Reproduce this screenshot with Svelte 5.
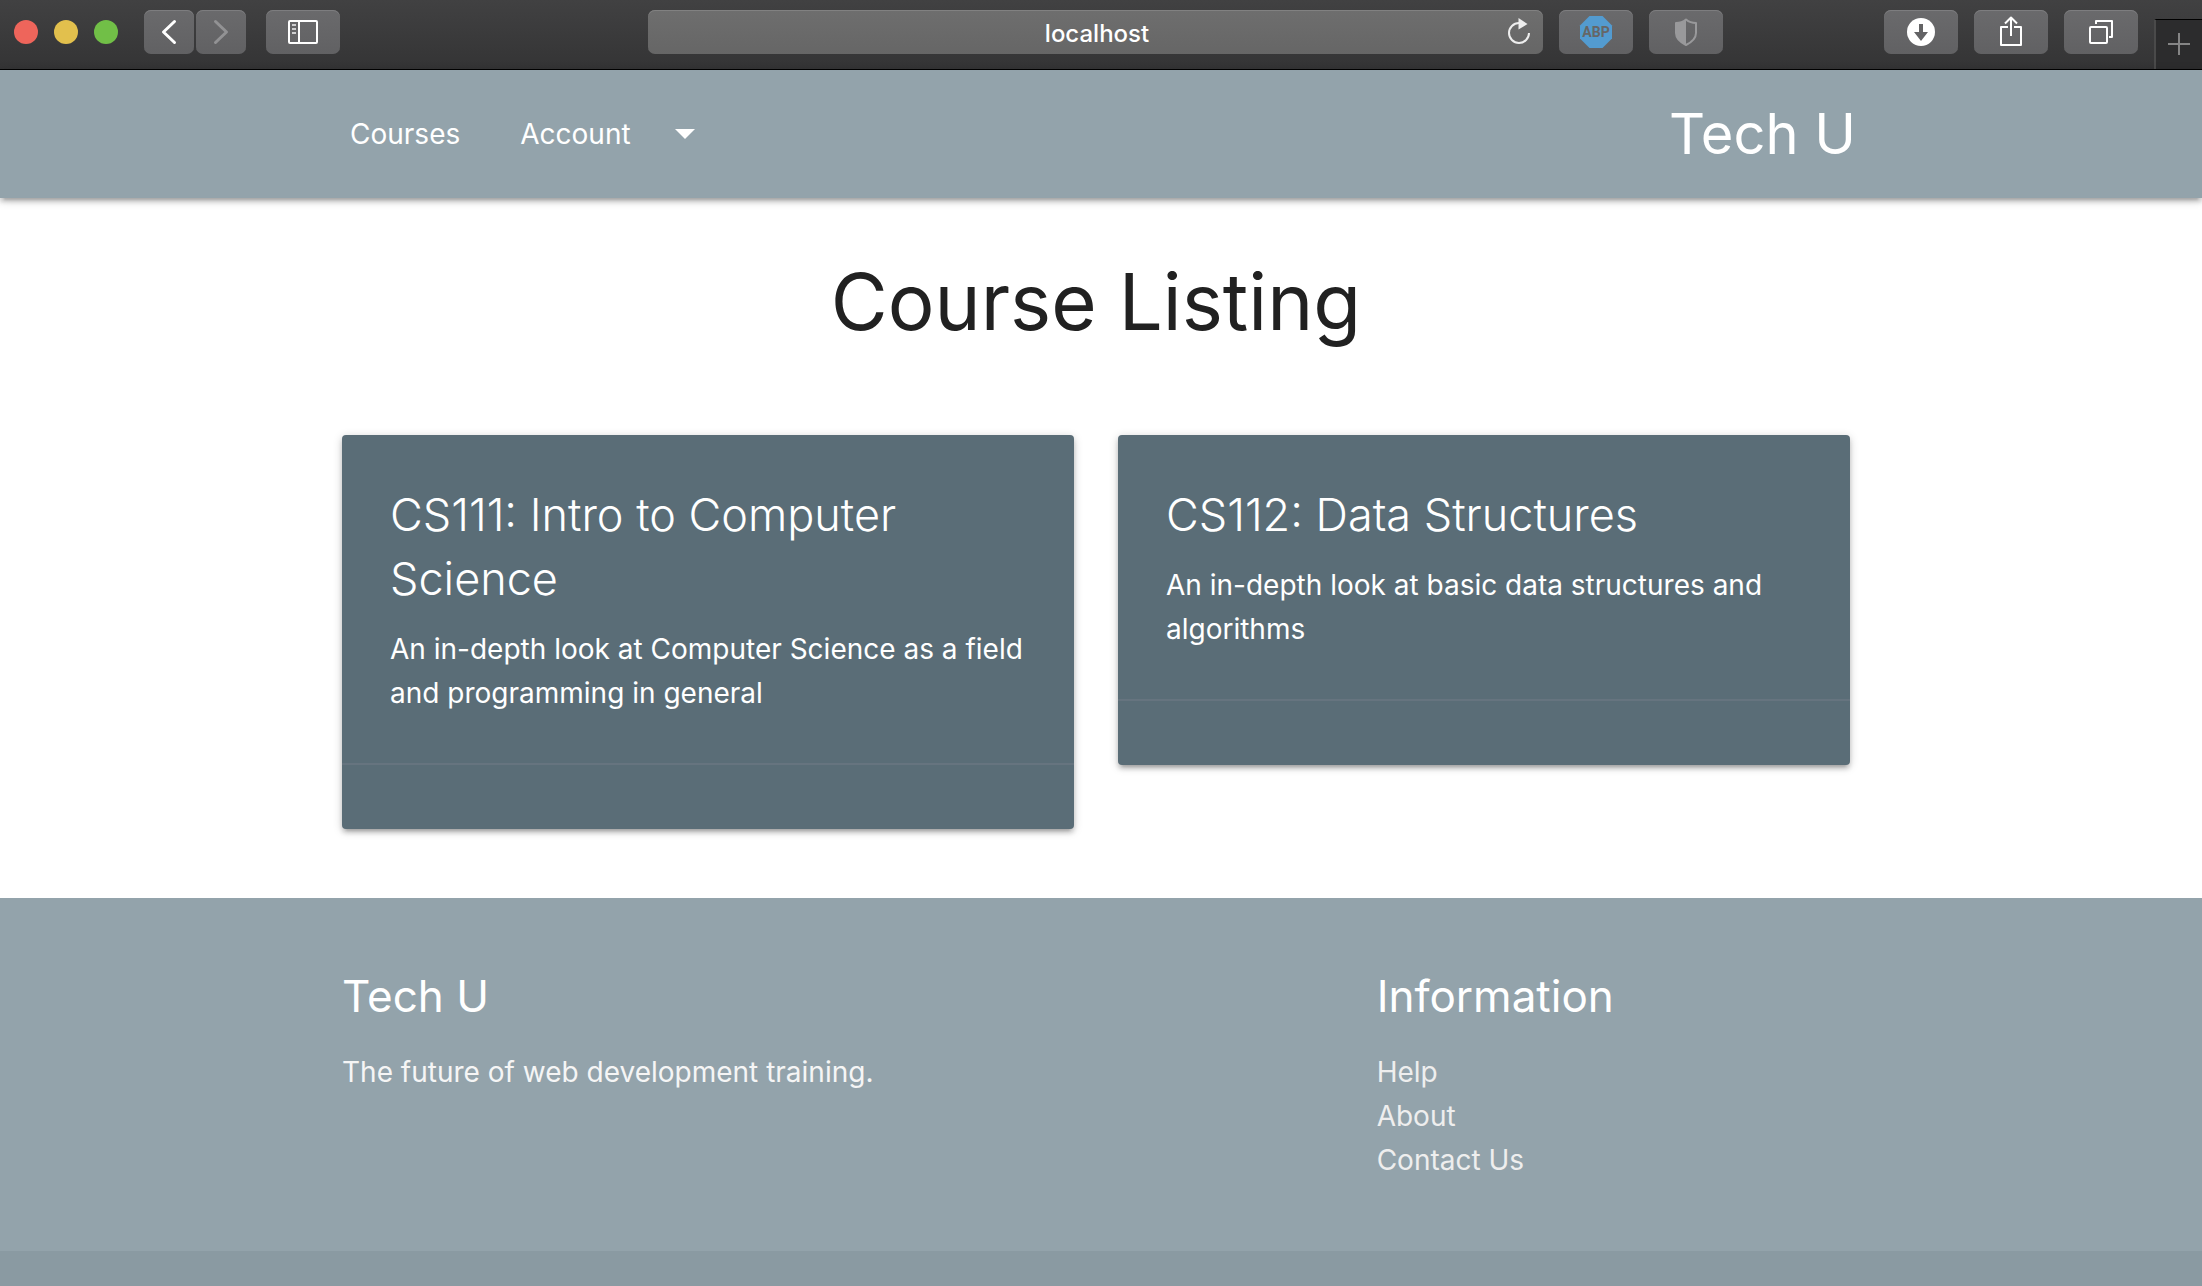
<script>
  const courses = [
    {
      title: 'CS111: Intro to Computer Science',
      text: 'An in-depth look at Computer Science as a field and programming in general',
    },
    {
      title: 'CS112: Data Structures',
      text: 'An in-depth look at basic data structures and algorithms',
    },
  ];
  const links = ['Help', 'About', 'Contact Us'];
</script>

<div class="toolbar">
  <div class="lights">
    <span class="light red"></span>
    <span class="light yellow"></span>
    <span class="light green"></span>
  </div>
  <div class="history">
    <button class="tool small" aria-label="Back">
      <svg width="50" height="44" viewBox="0 0 50 44"><path d="M30.500 11.500 19.500 22 30.500 32.500" fill="none" stroke="#fff" stroke-width="3" stroke-linecap="round" stroke-linejoin="round" /></svg>
    </button>
    <button class="tool small" aria-label="Forward">
      <svg width="50" height="44" viewBox="0 0 50 44"><path d="M19.500 11.500 30.500 22 19.500 32.500" fill="none" stroke="#929294" stroke-width="3" stroke-linecap="round" stroke-linejoin="round" /></svg>
    </button>
  </div>
  <button class="tool" aria-label="Sidebar">
    <svg width="74" height="44" viewBox="0 0 74 44">
      <rect x="23" y="11" width="28" height="22" rx="1" fill="none" stroke="#fff" stroke-width="2" />
      <path d="M33 11V33" stroke="#fff" stroke-width="2" />
      <path d="M26 15H30M26 19H30M26 23H30" stroke="#d0d0d1" stroke-width="2" />
    </svg>
  </button>
  <div class="address">
    <input type="text" value="localhost" aria-label="Address" />
    <button class="reload" aria-label="Reload">
      <svg width="28" height="30" viewBox="0 0 28 30">
        <path d="M13 6A10 10 0 1 0 23 16" fill="none" stroke="#eee" stroke-width="2" />
        <path d="M12.500 1V12.500L21.500 7Z" fill="#eee" />
      </svg>
    </button>
  </div>
  <button class="tool" aria-label="Adblock Plus">
    <svg width="74" height="44" viewBox="0 0 74 44">
      <path d="M30.500 6H43.500L53 15.500V28.500L43.500 38H30.500L21 28.500V15.500Z" fill="#539bd0" />
      <text x="37" y="27" text-anchor="middle" class="abp">ABP</text>
    </svg>
  </button>
  <button class="tool" aria-label="Privacy report">
    <svg width="74" height="44" viewBox="0 0 74 44">
      <path d="M37 9.500C40 12 43.500 13 47 13V23C47 29 42 32.500 37 35C32 32.500 27 29 27 23V13C30.500 13 34 12 37 9.500Z" fill="none" stroke="#99999b" stroke-width="2" stroke-linejoin="round" />
      <path d="M37 9.500V35C32 32.500 27 29 27 23V13C30.500 13 34 12 37 9.500Z" fill="#99999b" />
    </svg>
  </button>
  <div class="actions">
    <button class="tool" aria-label="Downloads">
      <svg width="74" height="44" viewBox="0 0 74 44">
        <circle cx="37" cy="22" r="14" fill="#fff" />
        <path d="M35 14H39V22H44L37 31 30 22H35Z" fill="#636365" />
      </svg>
    </button>
    <button class="tool" aria-label="Share">
      <svg width="74" height="44" viewBox="0 0 74 44" fill="none" stroke="#fff" stroke-width="2" stroke-linejoin="round">
        <path d="M34 17H27V35H47V17H40" />
        <path d="M37 26V8M31 13.500 37 7.500 43 13.500" />
      </svg>
    </button>
    <button class="tool" aria-label="Tab overview">
      <svg width="74" height="44" viewBox="0 0 74 44" fill="none" stroke="#fff" stroke-width="2" stroke-linejoin="round">
        <rect x="26" y="17" width="17" height="16" rx="1" />
        <path d="M32 14V11H48V27H45" />
      </svg>
    </button>
  </div>
  <button class="newtab" aria-label="New tab">
    <svg width="24" height="24" viewBox="0 0 24 24"><path d="M12 1V23M1 12H23" stroke="#858585" stroke-width="2" /></svg>
  </button>
</div>

<nav>
  <div class="container navrow">
    <a class="item" href="#courses">Courses</a>
    <a class="item" href="#account">Account
      <svg width="20" height="10" viewBox="0 0 20 10"><path d="M0 0H20L10 10Z" fill="#fff" /></svg>
    </a>
    <a class="brand" href="#home">Tech U</a>
  </div>
</nav>

<main>
  <div class="container">
    <h1>Course Listing</h1>
    <div class="cards">
      {#each courses as course}
        <article class="card">
          <div class="content">
            <h2>{course.title}</h2>
            <p>{course.text}</p>
          </div>
          <div class="action"></div>
        </article>
      {/each}
    </div>
  </div>
</main>

<footer>
  <div class="info">
    <div class="container columns">
      <div class="column">
        <h3>Tech U</h3>
        <p>The future of web development training.</p>
      </div>
      <div class="column">
        <h3>Information</h3>
        <ul>
          {#each links as link}
            <li><a href="#info">{link}</a></li>
          {/each}
        </ul>
      </div>
    </div>
  </div>
  <div class="copyright"></div>
</footer>

<style>
  :global(body) {
    background: #fff;
    font-family: Inter, 'Liberation Sans', sans-serif;
    font-size: 28px;
    line-height: 44px;
  }
  :global(#app) {
    display: flex;
    flex-direction: column;
    min-height: 100vh;
  }
  h1, h2, h3, p, ul { margin: 0; padding: 0; font-weight: 400; }
  button { border: 0; padding: 0; font: inherit; color: inherit; }
  a { color: inherit; text-decoration: none; }
  svg { display: block; flex: none; }

  .toolbar {
    display: flex;
    align-items: flex-start;
    gap: 16px;
    height: 70px;
    box-sizing: border-box;
    padding: 10px 0 0 14px;
    background: linear-gradient(#414142, #343435);
    border-bottom: 1px solid #000;
  }
  .lights { display: flex; gap: 16px; padding: 10px 10px 10px 0; }
  .light { width: 24px; height: 24px; border-radius: 50%; }
  .red { background: #ee655b; }
  .yellow { background: #e2c04d; }
  .green { background: #71bf47; }
  .history { display: flex; gap: 2px; margin-right: 4px; }
  .tool {
    width: 74px;
    height: 44px;
    border-radius: 7px;
    background: linear-gradient(#6a6a6c, #616163);
    box-shadow: inset 0 1px #7d7d7f;
    overflow: hidden;
  }
  .small { width: 50px; }
  .address {
    display: flex;
    align-items: center;
    flex: 1;
    height: 44px;
    margin-left: 292px;
    border-radius: 7px;
    background: linear-gradient(#6e6e6e, #666);
    box-shadow: inset 0 1px #818181;
  }
  .address input {
    flex: 1;
    min-width: 0;
    height: 44px;
    box-sizing: border-box;
    border: 0;
    padding: 2px 0 0 40px;
    background: none;
    color: #fff;
    font: 500 24px/40px Inter, 'Liberation Sans', sans-serif;
    text-align: center;
  }
  .reload { background: none; margin-right: 9px; }
  .abp { font: 700 14px Roboto, sans-serif; fill: #666; }
  .actions { display: flex; gap: 16px; margin-left: 145px; }
  .newtab {
    display: flex;
    align-items: center;
    justify-content: center;
    width: 48px;
    height: 50px;
    margin-top: 9px;
    padding-bottom: 2px;
    box-sizing: border-box;
    border-top: 1px solid #000;
    border-left: 2px solid #4a4a4a;
    background: #2c2c2d;
  }

  nav {
    flex: none;
    padding-right: 10px;
    background: #93a3ab;
    color: #fff;
    box-shadow: 0 4px 4px rgba(0, 0, 0, .14), 0 6px 2px -4px rgba(0, 0, 0, .12), 0 2px 10px rgba(0, 0, 0, .2);
  }
  .container { width: 70.8%; margin: 0 auto; }
  .navrow { display: flex; align-items: center; }
  .item { display: flex; align-items: center; gap: 44px; padding: 0 30px; }
  .brand { margin-left: auto; padding-right: 16px; font-size: 56px; line-height: 128px; }

  main { padding-right: 10px; }
  h1 { padding: 46px 0 75px; font-size: 78px; line-height: 116px; color: #212121; text-align: center; }
  .cards {
    display: grid;
    grid-template-columns: 1fr 1fr;
    align-items: start;
    gap: 44px;
    padding: 0 22px 69px;
  }
  .card {
    border-radius: 4px;
    background: #5a6d77;
    color: #fff;
    box-shadow: 0 4px 4px rgba(0, 0, 0, .14), 0 6px 2px -4px rgba(0, 0, 0, .12), 0 2px 10px rgba(0, 0, 0, .2);
  }
  .content { padding: 48px; }
  h2 { margin-bottom: 16px; font-size: 45px; line-height: 64px; font-weight: 300; }
  .action { height: 64px; border-top: 2px solid #66747f; }

  footer {
    display: flex;
    flex-direction: column;
    flex: 1;
    background: #93a3ab;
  }
  .info { padding: 72px 10px 69px 0; }
  .columns { display: grid; grid-template-columns: 2fr 1fr; }
  .column { padding: 0 22px; }
  h3 { margin-bottom: 28px; font-size: 44px; line-height: 52px; color: #fff; }
  footer p { color: #f5f5f5; }
  ul { list-style: none; color: #eee; }
  .copyright { flex: 1; min-height: 35px; background: #8a9aa2; }
</style>
